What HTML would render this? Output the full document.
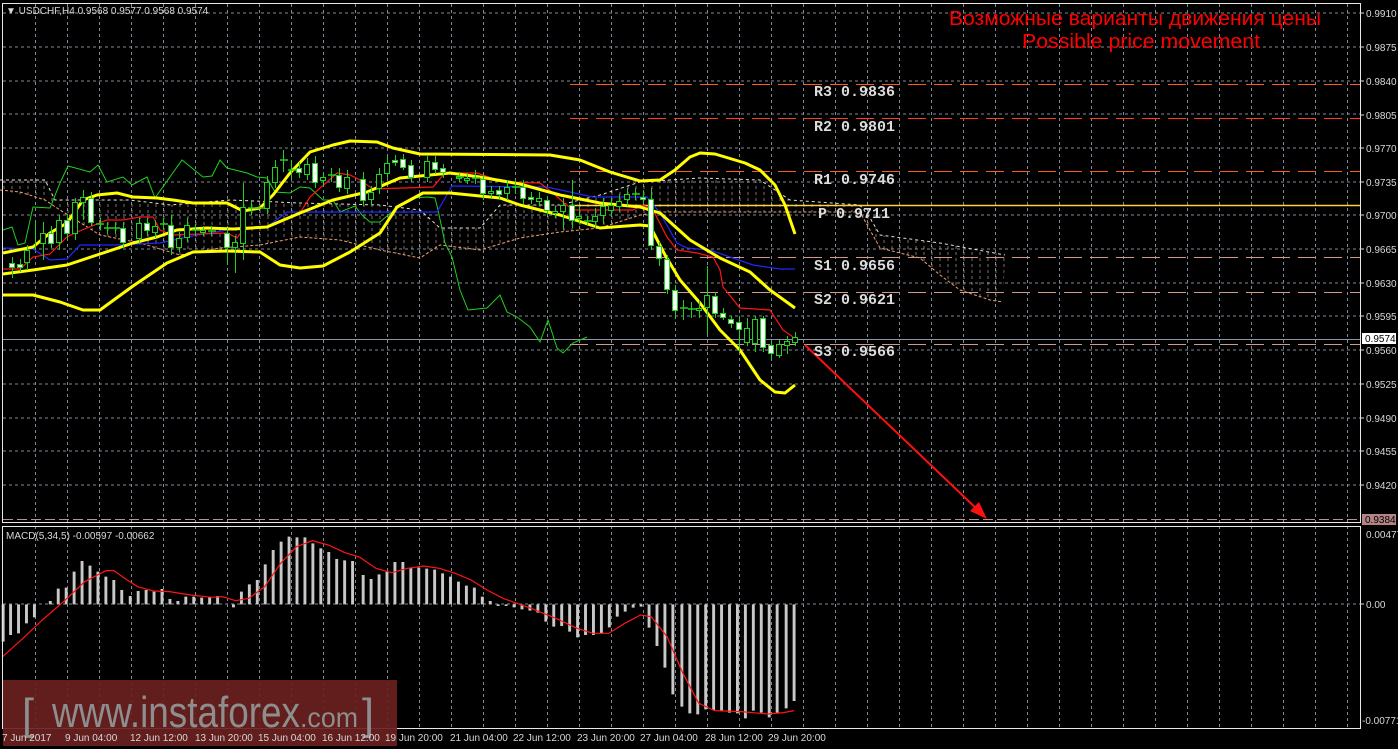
<!DOCTYPE html>
<html><head><meta charset="utf-8"><style>
html,body{margin:0;padding:0;background:#000;width:1398px;height:749px;overflow:hidden}
svg{display:block}
.s{font-family:"Liberation Sans",sans-serif}
.m{font-family:"Liberation Mono",monospace}
</style></head><body>
<svg width="1398" height="749" viewBox="0 0 1398 749" xmlns="http://www.w3.org/2000/svg">
<rect width="1398" height="749" fill="#000"/>
<defs>
<pattern id="vd" width="8" height="749" patternUnits="userSpaceOnUse">
<line x1="4" y1="0" x2="4" y2="749" stroke="#e8c8b0" stroke-width="1" stroke-dasharray="3,3"/>
</pattern>
</defs>
<g stroke="#7f8a99" stroke-width="1" stroke-dasharray="3,3">
<line x1="3" y1="13" x2="1360" y2="13"/><line x1="3" y1="47" x2="1360" y2="47"/><line x1="3" y1="81" x2="1360" y2="81"/><line x1="3" y1="114" x2="1360" y2="114"/><line x1="3" y1="148" x2="1360" y2="148"/><line x1="3" y1="182" x2="1360" y2="182"/><line x1="3" y1="215" x2="1360" y2="215"/><line x1="3" y1="249" x2="1360" y2="249"/><line x1="3" y1="283" x2="1360" y2="283"/><line x1="3" y1="316" x2="1360" y2="316"/><line x1="3" y1="350" x2="1360" y2="350"/><line x1="3" y1="384" x2="1360" y2="384"/><line x1="3" y1="418" x2="1360" y2="418"/><line x1="3" y1="451" x2="1360" y2="451"/><line x1="3" y1="485" x2="1360" y2="485"/>
<line x1="3" y1="604" x2="1360" y2="604"/>
</g>
<g stroke="#7f8a99" stroke-width="1" stroke-dasharray="3,3">
<path d="M35.5 4V728M67.5 4V728M99.5 4V728M131.5 4V728M163.5 4V728M195.5 4V728M227.5 4V728M259.5 4V728M291.5 4V728M323.5 4V728M355.5 4V728M387.5 4V728M419.5 4V728M451.5 4V728M483.5 4V728M515.5 4V728M547.5 4V728M579.5 4V728M611.5 4V728M643.5 4V728M675.5 4V728M707.5 4V728M739.5 4V728M771.5 4V728M803.5 4V728M835.5 4V728M867.5 4V728M899.5 4V728M931.5 4V728M963.5 4V728M995.5 4V728M1027.5 4V728M1059.5 4V728M1091.5 4V728M1123.5 4V728M1155.5 4V728M1187.5 4V728M1219.5 4V728M1251.5 4V728M1283.5 4V728M1315.5 4V728M1347.5 4V728"/>
</g>
<rect x="0" y="522" width="1360" height="4" fill="#000"/>
<polygon fill="url(#vd)" opacity="0.55" points="0,180 45,180 55,200 130,200 170,205 230,200 300,203 380,205 420,210 440,228 480,228 500,205 560,205 600,195 640,182 700,178 760,180 790,200 860,205 870,218 880,235 940,243 1005,255 1003,302 990,300 960,290 940,275 920,258 880,248 860,212 800,212 760,212 700,212 660,212 640,215 600,228 560,232 520,238 480,250 440,245 420,258 380,250 340,240 300,237 260,245 220,248 180,255 140,243 100,235 60,210 45,200 0,190"/>
<polyline fill="none" stroke="#f0a070" stroke-width="1" stroke-dasharray="3,2" points="0,190 20,192 45,200 60,210 100,235 140,243 180,255 220,248 260,245 300,237 340,240 380,250 420,258 440,245 480,250 520,238 560,232 600,228 640,215 660,212 700,212 760,212 800,212 860,212 880,248 920,258 940,275 960,290 990,300 1003,302"/>
<polyline fill="none" stroke="#e8e0d8" stroke-width="1" stroke-dasharray="3,3" points="0,180 45,180 55,200 130,200 170,205 230,200 300,203 380,205 420,210 440,228 480,228 500,205 560,205 600,195 640,182 700,178 760,180 790,200 860,205 870,218 880,235 940,243 1005,255"/>
<g stroke-width="1" stroke-dasharray="18,8">
<line x1="570" y1="84.5" x2="1360" y2="84.5" stroke="#ff5a1e"/>
<line x1="570" y1="118.5" x2="1360" y2="118.5" stroke="#ff3c1e"/>
<line x1="570" y1="171.5" x2="1360" y2="171.5" stroke="#ff5a1e"/>
<line x1="570" y1="257.5" x2="1360" y2="257.5" stroke="#d09a8a"/>
<line x1="570" y1="292.5" x2="1360" y2="292.5" stroke="#d09a8a"/>
<line x1="570" y1="344.5" x2="1360" y2="344.5" stroke="#d09a8a"/>
<line x1="3" y1="519.5" x2="1360" y2="519.5" stroke="#c09090" stroke-dasharray="10,4"/>
</g>
<line x1="570" y1="205.5" x2="1360" y2="205.5" stroke="#ffd23c" stroke-width="1.5"/>
<line x1="3" y1="339.5" x2="1360" y2="339.5" stroke="#8a96a4" stroke-width="1"/>
<polyline fill="none" stroke="#1ed21e" stroke-width="1" points="3,230 12,227 18,245 25,243 33,207 50,208 60,183 68,166 90,172 98,165 107,182 123,177 132,185 147,177 155,198 182,160 203,177 212,176 220,160 227,168 247,173 257,177 267,178 275,192 290,193 300,187 310,188 323,200 333,200 340,212 355,206 362,215 370,222 380,222 393,211 413,198 427,197 435,198 438,210 445,243 452,257 460,290 468,310 487,308 500,295 507,312 517,317 530,327 540,342 548,320 557,348 563,353 573,343 587,337"/>
<polyline fill="none" stroke="#1e28ff" stroke-width="1.2" points="3,248 33,249 50,260 67,259 80,245 117,245 160,243 187,237 227,230 267,227 287,212 437,212 452,186 547,187 593,197 647,197 660,213 677,243 687,248 710,250 730,257 753,265 780,269 795,269"/>
<polyline fill="none" stroke="#ff1414" stroke-width="1.2" points="3,269 20,269 33,257 50,254 67,237 77,232 107,220 123,220 140,217 153,217 160,230 173,235 227,233 237,238 243,230 267,227 300,213 310,197 337,173 350,175 360,180 373,189 433,187 445,173 477,173 503,182 540,183 553,193 563,202 573,210 600,210 633,210 643,205 653,210 667,237 677,250 697,253 713,257 720,270 723,287 740,308 770,310 783,330 793,337"/>
<g fill="none" stroke="#ffff00" stroke-width="3" stroke-linejoin="round">
<polyline points="3,253 33,247 50,233 67,223 83,200 97,195 117,193 133,197 157,198 173,200 193,203 227,203 243,211 260,208 273,195 290,173 310,152 333,145 350,141 377,142 393,148 420,154 550,155 580,160 610,172 640,181 660,180 675,170 690,157 700,153 715,154 745,163 760,170 775,185 785,205 795,234"/>
<polyline points="3,274 33,270 67,265 100,254 133,243 157,237 177,230 207,228 233,229 267,227 300,213 333,200 367,192 400,178 450,173 480,177 520,184 560,195 600,203 640,207 660,213 690,240 720,258 750,272 770,290 795,308"/>
<polyline points="3,295 33,295 60,302 83,310 100,310 133,286 167,263 193,252 227,251 260,252 280,265 300,268 323,266 350,252 380,233 397,207 423,193 450,193 480,196 500,198 520,205 560,215 600,228 640,225 650,226 665,255 680,280 700,303 720,330 740,350 760,380 775,392 785,393 795,385"/>
</g>
<g stroke="#1ed21e" stroke-width="1">
<path d="M12.5 257V278M20.5 259V272M27.5 245V270M35.5 221V250M43.5 222V260M51.5 226V248M59.5 215V250M67.5 214V240M75.5 198V240M83.5 190V220M91.5 192V226M100.5 218V230M107.5 222V234M115.5 222V234M123.5 222V248M139.5 218V244M147.5 218V236M155.5 220V238M163.5 218V230M171.5 215V255M179.5 232V252M187.5 218V242M195.5 224V236M203.5 226V236M211.5 226V236M227.5 228V265M235.5 236V273M243.5 183V260M251.5 200V215M267.5 176V214M275.5 160V188M283.5 150V172M291.5 160V178M299.5 162V178M307.5 158V180M315.5 156V188M323.5 172V186M331.5 168V182M339.5 168V192M347.5 170V194M363.5 172V206M371.5 186V205M379.5 168V194M387.5 156V178M395.5 155V166M403.5 154V170M411.5 160V182M427.5 155V182M435.5 156V174M443.5 164V178M459.5 172V182M467.5 173V184M475.5 170V184M483.5 174V200M491.5 186V198M499.5 186V200M507.5 180V200M515.5 180V194M523.5 180V204M531.5 192V204M539.5 192V206M547.5 196V216M555.5 206V218M563.5 198V230M572.5 180V228M579.5 206V224M587.5 216V226M595.5 208V228M603.5 198V224M611.5 198V216M619.5 194V212M627.5 188V206M635.5 188V200M643.5 190V204M651.5 188V250M659.5 242V266M667.5 255V294M675.5 285V318M683.5 300V320M691.5 302V318M699.5 300V318M707.5 266V334M715.5 292V318M723.5 308V320M731.5 316V328M739.5 316V352M747.5 318V346M755.5 316V352M763.5 316V352M771.5 342V360M779.5 340V358M787.5 336V354M795.5 332V346"/>
</g>
<g stroke="#1ed21e" stroke-width="1" fill="#fff">
<rect x="9.5" y="263.5" width="5" height="4"/><rect x="17.5" y="264.5" width="5" height="3"/><rect x="48.5" y="233.5" width="5" height="10"/><rect x="64.5" y="220.5" width="5" height="13"/><rect x="88.5" y="198.5" width="5" height="24"/><rect x="120.5" y="228.5" width="5" height="14"/><rect x="144.5" y="223.5" width="5" height="7"/><rect x="168.5" y="225.5" width="5" height="22"/><rect x="224.5" y="233.5" width="5" height="14"/><rect x="296.5" y="168.5" width="5" height="4"/><rect x="312.5" y="163.5" width="5" height="19"/><rect x="336.5" y="175.5" width="5" height="12"/><rect x="360.5" y="179.5" width="5" height="21"/><rect x="392.5" y="160.5" width="5" height="2"/><rect x="400.5" y="159.5" width="5" height="8"/><rect x="408.5" y="165.5" width="5" height="12"/><rect x="432.5" y="162.5" width="5" height="7"/><rect x="440.5" y="168.5" width="5" height="4"/><rect x="480.5" y="179.5" width="5" height="14"/><rect x="496.5" y="190.5" width="5" height="4"/><rect x="520.5" y="187.5" width="5" height="11"/><rect x="528.5" y="197.5" width="5" height="2"/><rect x="544.5" y="200.5" width="5" height="10"/><rect x="569.5" y="205.5" width="5" height="15"/><rect x="640.5" y="197.5" width="5" height="2"/><rect x="648.5" y="199.5" width="5" height="46"/><rect x="656.5" y="246.5" width="5" height="12"/><rect x="664.5" y="259.5" width="5" height="30"/><rect x="672.5" y="290.5" width="5" height="20"/><rect x="712.5" y="296.5" width="5" height="17"/><rect x="720.5" y="313.5" width="5" height="4"/><rect x="728.5" y="319.5" width="5" height="4"/><rect x="736.5" y="322.5" width="5" height="7"/><rect x="760.5" y="318.5" width="5" height="29"/><rect x="768.5" y="345.5" width="5" height="8"/>
</g>
<g stroke="#1ed21e" stroke-width="1" fill="#000">
<rect x="24.5" y="250.5" width="5" height="12"/><rect x="40.5" y="233.5" width="5" height="10"/><rect x="56.5" y="220.5" width="5" height="22"/><rect x="72.5" y="202.5" width="5" height="31"/><rect x="80.5" y="197.5" width="5" height="5"/><rect x="136.5" y="223.5" width="5" height="15"/><rect x="152.5" y="226.5" width="5" height="6"/><rect x="176.5" y="238.5" width="5" height="9"/><rect x="184.5" y="225.5" width="5" height="12"/><rect x="200.5" y="230.5" width="5" height="2"/><rect x="232.5" y="242.5" width="5" height="5"/><rect x="240.5" y="207.5" width="5" height="36"/><rect x="264.5" y="182.5" width="5" height="26"/><rect x="272.5" y="167.5" width="5" height="15"/><rect x="304.5" y="164.5" width="5" height="10"/><rect x="320.5" y="177.5" width="5" height="3"/><rect x="344.5" y="177.5" width="5" height="11"/><rect x="368.5" y="192.5" width="5" height="7"/><rect x="376.5" y="174.5" width="5" height="14"/><rect x="384.5" y="163.5" width="5" height="10"/><rect x="424.5" y="161.5" width="5" height="16"/><rect x="456.5" y="176.5" width="5" height="2"/><rect x="464.5" y="178.5" width="5" height="2"/><rect x="488.5" y="191.5" width="5" height="2"/><rect x="504.5" y="187.5" width="5" height="6"/><rect x="536.5" y="198.5" width="5" height="3"/><rect x="552.5" y="211.5" width="5" height="2"/><rect x="560.5" y="205.5" width="5" height="6"/><rect x="576.5" y="216.5" width="5" height="2"/><rect x="592.5" y="216.5" width="5" height="5"/><rect x="600.5" y="206.5" width="5" height="9"/><rect x="608.5" y="205.5" width="5" height="5"/><rect x="616.5" y="201.5" width="5" height="5"/><rect x="624.5" y="194.5" width="5" height="5"/><rect x="696.5" y="308.5" width="5" height="2"/><rect x="704.5" y="295.5" width="5" height="12"/><rect x="744.5" y="328.5" width="5" height="14"/><rect x="752.5" y="319.5" width="5" height="24"/><rect x="776.5" y="344.5" width="5" height="11"/><rect x="784.5" y="341.5" width="5" height="4"/><rect x="792.5" y="337.5" width="5" height="5"/>
</g>
<path d="M96 224h8M104 228h8M112 228h8M160 224h8M192 230h8M208 231h8M248 208h8M256 208h8M280 160h8M288 170h8M328 175h8M456 177h8M472 178h8M512 187h8M584 221h8M632 194h8M680 308h8M688 309h8" stroke="#1ed21e" stroke-width="1.5"/>
<line x1="805" y1="345" x2="980" y2="512" stroke="#ff1010" stroke-width="2"/>
<polygon points="987,519 970,511 979,502" fill="#ff1010"/>
<g fill="#dcdcdc" font-weight="bold" font-size="15" class="m">
<text class="m" x="814" y="96">R3 0.9836</text>
<text class="m" x="814" y="131">R2 0.9801</text>
<text class="m" x="814" y="184">R1 0.9746</text>
<text class="m" x="818" y="218">P 0.9711</text>
<text class="m" x="814" y="270">S1 0.9656</text>
<text class="m" x="814" y="304">S2 0.9621</text>
<text class="m" x="814" y="356">S3 0.9566</text>
</g>
<text class="s" x="949" y="25" fill="#ff0000" font-size="20" textLength="372" lengthAdjust="spacingAndGlyphs">Возможные варианты движения цены</text>
<text class="s" x="1022" y="48" fill="#ff0000" font-size="20" textLength="238" lengthAdjust="spacingAndGlyphs">Possible price movement</text>
<text class="s" x="6" y="14" fill="#d8d8d8" font-size="10">▼ USDCHF,H4  0.9568 0.9577 0.9568 0.9574</text>
<g transform="translate(0,520) scale(0.5294,0.3333)" fill="#c8c8c8">
<path d="M6 253V365M20 253V345M35 253V340M50 253V310M65 253V292M95 253V243M110 253V206M125 253V203M140 253V155M155 253V123M170 253V137M185 253V155M200 253V170M215 253V180M230 253V210M246 253V228M261 253V213M276 253V210M291 253V215M306 253V207M321 253V237M336 253V243M351 253V230M366 253V230M381 253V233M396 253V232M411 253V228M441 253V262M456 253V215M471 253V193M486 253V180M501 253V133M516 253V90M531 253V65M546 253V50M561 253V52M576 253V52M591 253V70M606 253V85M621 253V96M636 253V117M651 253V121M666 253V123M686 253V165M701 253V177M716 253V163M731 253V155M746 253V126M761 253V126M776 253V143M791 253V143M806 253V146M821 253V149M836 253V160M851 253V170M866 253V185M881 253V197M896 253V203M911 253V230M926 253V243M941 253V258M956 253V258M971 253V262M986 253V268M1001 253V272M1016 253V278M1031 253V305M1046 253V320M1061 253V318M1076 253V335M1091 253V352M1106 253V345M1121 253V345M1136 253V340M1151 253V322M1166 253V290M1181 253V275M1196 253V263M1211 253V260M1226 253V323M1241 253V378M1256 253V443M1271 253V523M1288 253V560M1303 253V580M1318 253V583M1333 253V568M1348 253V570M1363 253V573M1378 253V578M1393 253V580M1408 253V595M1423 253V572M1438 253V578M1453 253V592M1468 253V578M1485 253V565M1500 253V543" stroke="#c8c8c8" stroke-width="5.5"/>
<polyline fill="none" stroke="#ff1414" stroke-width="1.2" vector-effect="non-scaling-stroke" points="5,410 40,360 80,300 120,245 160,185 200,152 215,152 240,180 260,200 290,213 320,215 360,225 400,232 420,230 445,242 470,235 500,200 530,130 560,80 590,62 620,75 650,97 680,112 710,145 740,158 770,145 800,138 830,145 860,160 890,180 920,210 950,235 1000,263 1050,295 1090,325 1120,340 1150,340 1180,310 1210,285 1230,290 1260,350 1290,460 1320,550 1350,572 1400,575 1450,582 1480,578 1500,572"/>
</g>
<text class="s" x="6" y="539" fill="#d8d8d8" font-size="10">MACD(5,34,5) -0.00597 -0.00662</text>
<g fill="none" stroke="#e8e8e8" stroke-width="1">
<path d="M2.5 3.5H1360.5V522.5H2.5Z"/>
<path d="M2.5 526.5H1360.5V728.5H2.5Z"/>
</g>
<rect x="3" y="680" width="394" height="66" fill="#6a1f1f" opacity="0.92"/>
<g fill="#8e8e8e" class="s">
<text class="s" x="22" y="729" font-size="44" font-weight="normal" transform="scale(1,1)" textLength="12" lengthAdjust="spacingAndGlyphs">[</text>
<text class="s" x="52" y="727" font-size="44" textLength="248" lengthAdjust="spacingAndGlyphs">www.instaforex</text>
<text class="s" x="300" y="727" font-size="28" textLength="58" lengthAdjust="spacingAndGlyphs">.com</text>
<text class="s" x="362" y="729" font-size="44" textLength="12" lengthAdjust="spacingAndGlyphs">]</text>
</g>
<g fill="#d8d8d8" font-size="10" class="s">
<text class="s" x="2" y="741">7 Jun 2017</text><text class="s" x="65" y="741">9 Jun 04:00</text><text class="s" x="130" y="741">12 Jun 12:00</text><text class="s" x="195" y="741">13 Jun 20:00</text><text class="s" x="258" y="741">15 Jun 04:00</text><text class="s" x="322" y="741">16 Jun 12:00</text><text class="s" x="385" y="741">19 Jun 20:00</text><text class="s" x="450" y="741">21 Jun 04:00</text><text class="s" x="513" y="741">22 Jun 12:00</text><text class="s" x="577" y="741">23 Jun 20:00</text><text class="s" x="640" y="741">27 Jun 04:00</text><text class="s" x="705" y="741">28 Jun 12:00</text><text class="s" x="768" y="741">29 Jun 20:00</text>
</g>
<g fill="#d8d8d8" font-size="10" class="s">
<path d="M1360 13h4M1360 47h4M1360 81h4M1360 115h4M1360 148h4M1360 182h4M1360 215h4M1360 249h4M1360 283h4M1360 316h4M1360 350h4M1360 384h4M1360 418h4M1360 451h4M1360 485h4M1360 604h4" stroke="#ddd"/>
<text class="s" x="1366" y="17">0.9910</text><text class="s" x="1366" y="51">0.9875</text><text class="s" x="1366" y="85">0.9840</text><text class="s" x="1366" y="119">0.9805</text><text class="s" x="1366" y="152">0.9770</text><text class="s" x="1366" y="186">0.9735</text><text class="s" x="1366" y="219">0.9700</text><text class="s" x="1366" y="253">0.9665</text><text class="s" x="1366" y="287">0.9630</text><text class="s" x="1366" y="320">0.9595</text><text class="s" x="1366" y="354">0.9560</text><text class="s" x="1366" y="388">0.9525</text><text class="s" x="1366" y="422">0.9490</text><text class="s" x="1366" y="455">0.9455</text><text class="s" x="1366" y="489">0.9420</text>
<rect x="1362" y="333" width="34" height="11" fill="#fff"/><text class="s" x="1365" y="342" fill="#000">0.9574</text>
<rect x="1362" y="514" width="34" height="11" fill="#b48484"/><text class="s" x="1365" y="523" fill="#000">0.9384</text>
<text class="s" x="1366" y="538">0.00477</text><text class="s" x="1366" y="608">0.00</text><text class="s" x="1362" y="724">-0.00771</text>
</g>
</svg>
</body></html>
